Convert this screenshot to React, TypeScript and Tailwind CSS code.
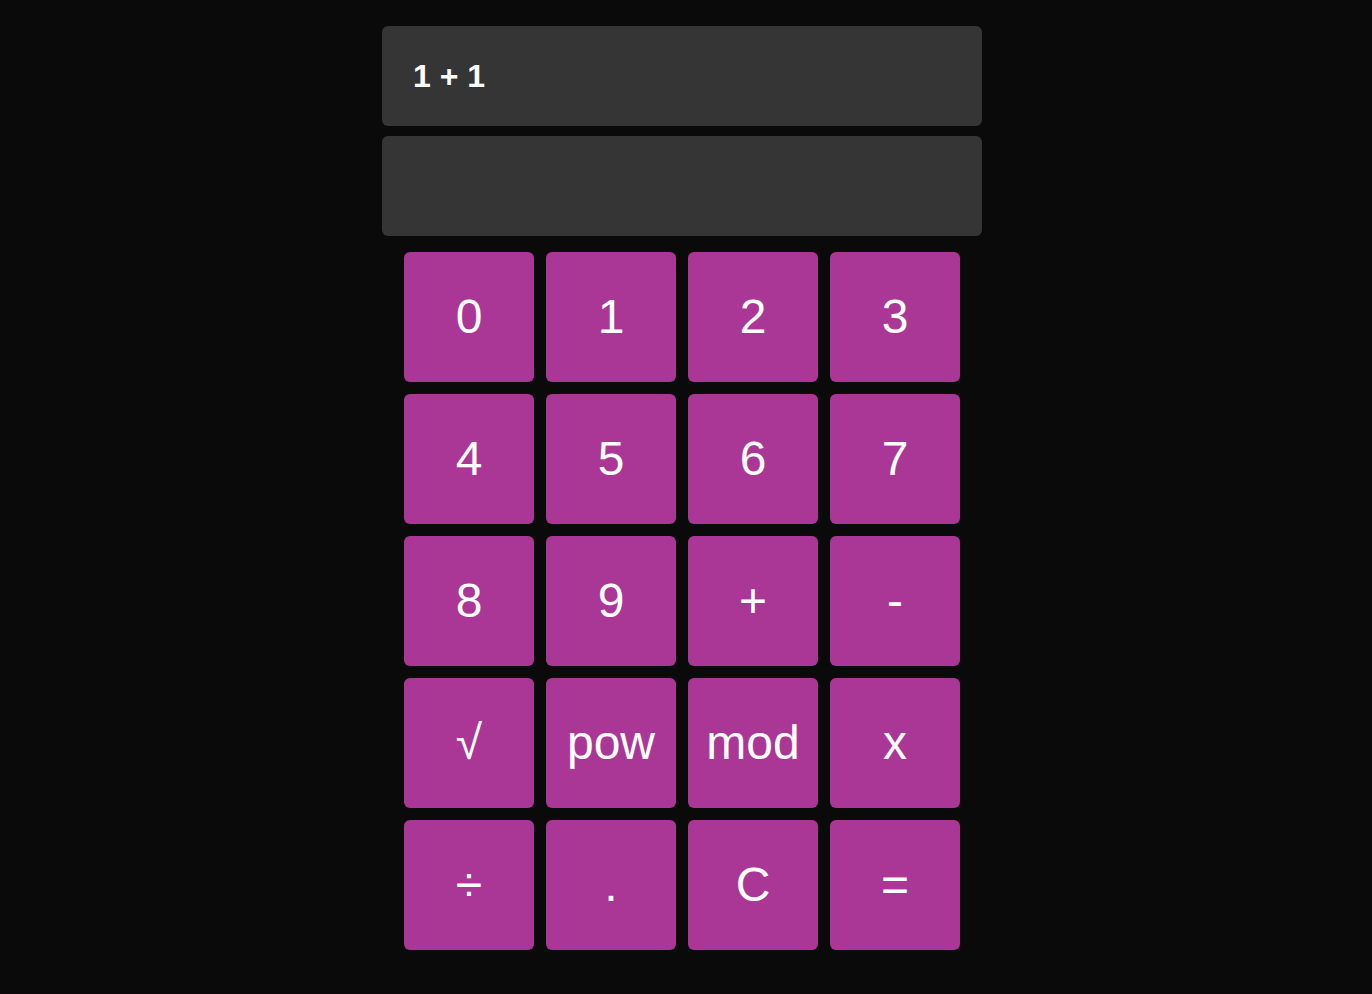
const keys = ['0', '1', '2', '3', '4', '5', '6', '7', '8', '9', '+', '-', '√', 'pow', 'mod', 'x', '÷', '.', 'C', '='];

function Key({ label }: { label: string }) {
  return (
    <button
      type="button"
      className="flex h-[130px] w-[130px] items-center justify-center rounded-md bg-[#aa3795] text-[48px] font-medium leading-none text-white"
    >
      {label}
    </button>
  );
}

export default function App() {
  return (
    <div
      className="flex min-h-[994px] justify-center bg-[#0a0a0a] pr-[8px] pt-[26px]"
      style={{ fontFamily: '"Liberation Sans", Arial, sans-serif' }}
    >
      <div className="flex w-[600px] flex-col items-center">
        <div className="flex h-[100px] w-full items-center rounded-md bg-[#353535] px-[31px] text-[32px] font-bold text-white">
          1 + 1
        </div>
        <div className="mt-[10px] h-[100px] w-full rounded-md bg-[#353535]" />
        <div className="mt-[16px] grid grid-cols-4 gap-[12px]">
          {keys.map((k) => (
            <Key key={k} label={k} />
          ))}
        </div>
      </div>
    </div>
  );
}
